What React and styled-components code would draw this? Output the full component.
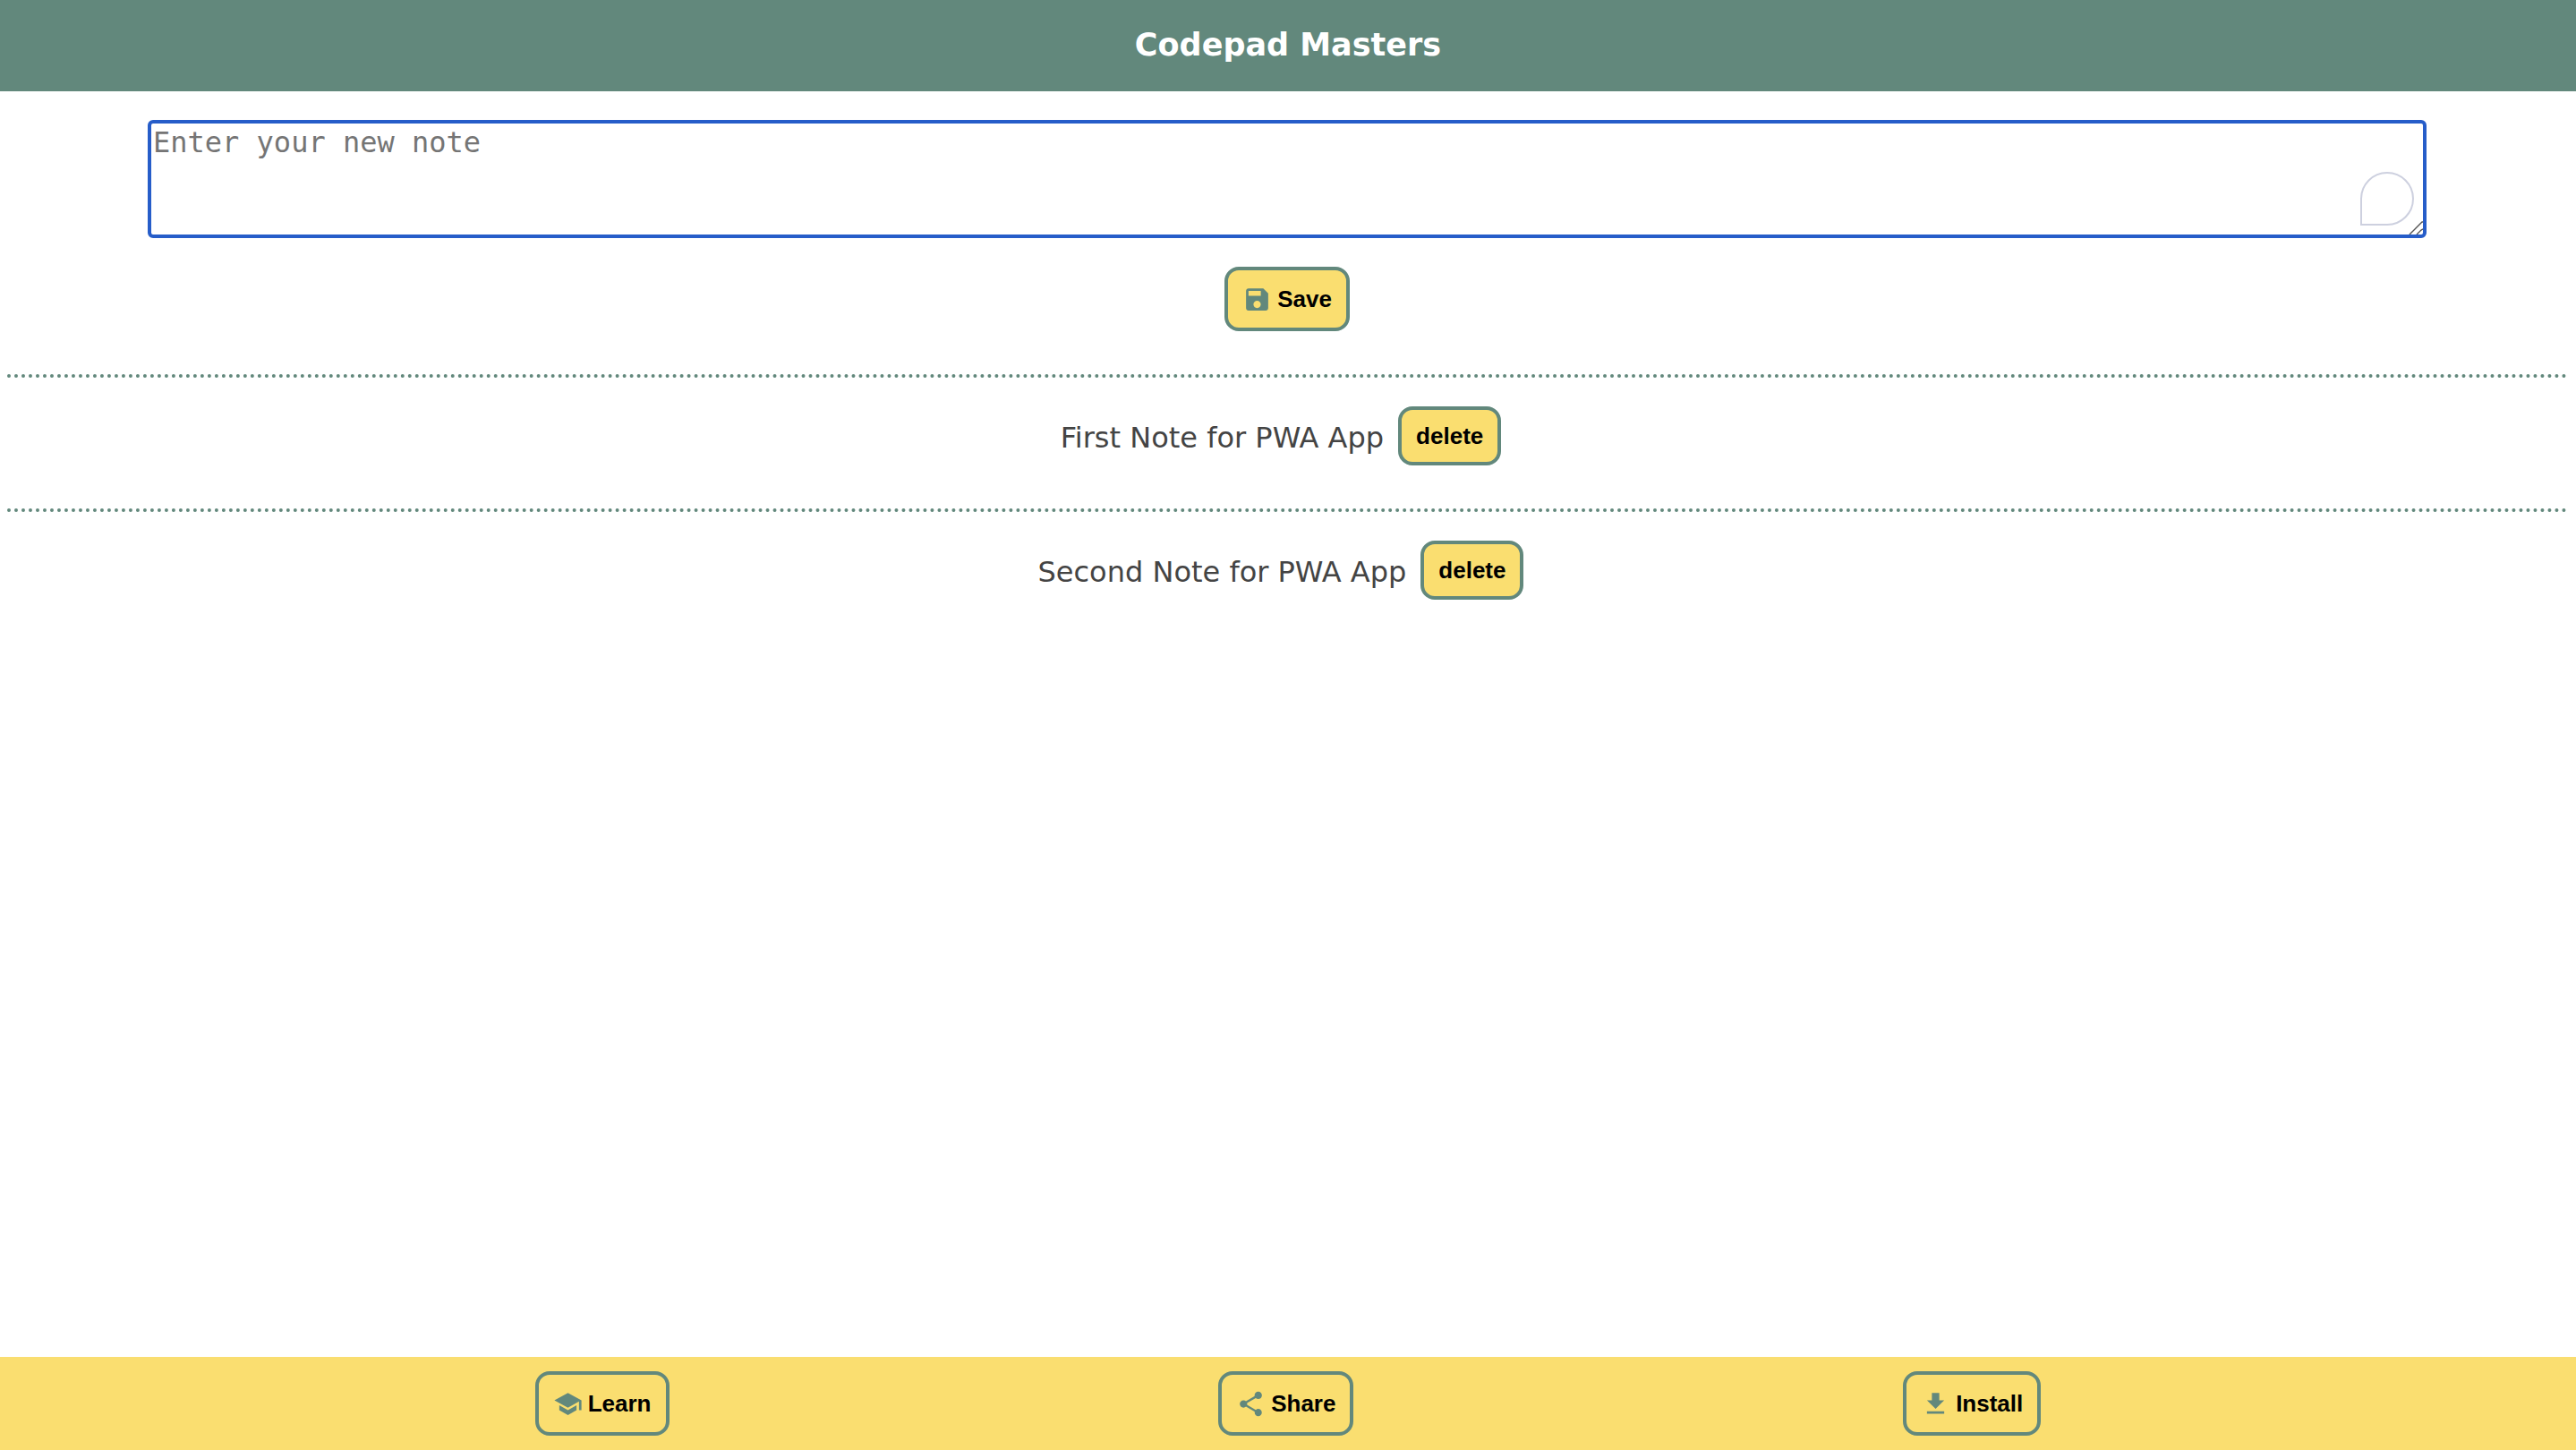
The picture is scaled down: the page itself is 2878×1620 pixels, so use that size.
import React, { useState } from "react";
import styled, { createGlobalStyle } from "styled-components";

const green = "#62887c";
const yellow = "#fade70";

const GlobalStyle = createGlobalStyle`
  *, *::before, *::after { box-sizing: border-box; }
  body {
    margin: 0;
    background: #fff;
    color: #444;
    font-family: Verdana, "DejaVu Sans", sans-serif;
    font-size: 32px;
    line-height: 40px;
  }
`;

const Page = styled.div`
  display: flex;
  flex-direction: column;
  min-height: 100vh;
`;

const Header = styled.header`
  display: flex;
  justify-content: center;
  padding: 30px 16px 32px;
  background: ${green};
`;

const Title = styled.h1`
  margin: 0;
  color: #fff;
  font-size: 35px;
  line-height: 40px;
`;

const Main = styled.main`
  flex: 1;
`;

const NoteForm = styled.form`
  display: flex;
  flex-direction: column;
  align-items: center;
  padding: 32px 167px 48px 165px;
`;

const Field = styled.div`
  position: relative;
  display: flex;
  width: 100%;
`;

const NoteInput = styled.textarea`
  flex: 1;
  min-width: 0;
  height: 132px;
  padding: 2px;
  border: 4px solid #265dc9;
  border-radius: 6px;
  outline: none;
  resize: none;
  background: #fff;
  color: #444;
  font: 32px "DejaVu Sans Mono", monospace;

  &::placeholder { color: #757575; }
`;

const Bubble = styled.span`
  position: absolute;
  right: 14px;
  bottom: 14px;
  width: 60px;
  height: 60px;
  border: 2px solid #cdd0df;
  border-radius: 50% 50% 50% 0;
  pointer-events: none;
`;

const Grip = styled.svg`
  position: absolute;
  right: 4px;
  bottom: 4px;
  width: 16px;
  height: 16px;
  pointer-events: none;
`;

const Button = styled.button`
  display: inline-flex;
  align-items: center;
  justify-content: center;
  gap: 6px;
  height: ${(p) => (p.$compact ? 66 : 72)}px;
  margin: 0 16px;
  padding: 0 16px;
  border: 4px solid ${green};
  border-radius: 16px;
  background: ${yellow};
  color: #000;
  font: bold 26px/30px "Liberation Sans", Arial, sans-serif;
  cursor: pointer;
`;

const SaveButton = styled(Button)`
  margin-top: 32px;
`;

const Icon = styled.svg`
  width: 33px;
  height: 33px;
  fill: ${green};
`;

const NoteList = styled.ul`
  margin: 0 8px;
  padding: 0;
  list-style: none;
`;

const Note = styled.li`
  display: flex;
  align-items: center;
  justify-content: center;
  padding: 32px 0 48px;
  border-top: 4px dotted ${green};
`;

const NoteText = styled.span`
  padding-top: 4px;
`;

const Footer = styled.footer`
  position: sticky;
  bottom: 0;
  display: flex;
  justify-content: space-evenly;
  padding: 16px 0;
  background: ${yellow};
`;

const icons = {
  save: "M17 3H5c-1.11 0-2 .9-2 2v14c0 1.1.89 2 2 2h14c1.1 0 2-.9 2-2V7l-4-4zm-5 16c-1.66 0-3-1.34-3-3s1.34-3 3-3 3 1.34 3 3-1.34 3-3 3zm3-10H5V5h10v4z",
  learn: "M5 13.18v4L12 21l7-3.82v-4L12 17l-7-3.82zM12 3L1 9l11 6 9-4.91V17h2V9L12 3z",
  share: "M18 16.08c-.76 0-1.44.3-1.96.77L8.91 12.7c.05-.23.09-.46.09-.7s-.04-.47-.09-.7l7.05-4.11c.54.5 1.25.81 2.04.81 1.66 0 3-1.34 3-3s-1.34-3-3-3-3 1.34-3 3c0 .24.04.47.09.7L8.04 9.81C7.5 9.31 6.79 9 6 9c-1.66 0-3 1.34-3 3s1.34 3 3 3c.79 0 1.5-.31 2.04-.81l7.12 4.16c-.05.21-.08.43-.08.65 0 1.61 1.31 2.92 2.92 2.92s2.92-1.31 2.92-2.92-1.31-2.92-2.92-2.92z",
  install: "M19 9h-4V3H9v6H5l7 7 7-7zM5 18v2h14v-2H5z",
};

const Glyph = ({ name }) => (
  <Icon viewBox="0 0 24 24" aria-hidden="true">
    <path d={icons[name]} />
  </Icon>
);

const actions = [
  { icon: "learn", label: "Learn" },
  { icon: "share", label: "Share" },
  { icon: "install", label: "Install" },
];

export default function App() {
  const [draft, setDraft] = useState("");
  const [notes, setNotes] = useState(["First Note for PWA App", "Second Note for PWA App"]);

  const save = (event) => {
    event.preventDefault();
    if (!draft.trim()) return;
    setNotes([...notes, draft.trim()]);
    setDraft("");
  };

  return (
    <Page>
      <GlobalStyle />
      <Header>
        <Title>Codepad Masters</Title>
      </Header>
      <Main>
        <NoteForm onSubmit={save}>
          <Field>
            <NoteInput
              aria-label="New note"
              placeholder="Enter your new note"
              value={draft}
              onChange={(event) => setDraft(event.target.value)}
            />
            <Bubble />
            <Grip viewBox="0 0 16 16" fill="none" stroke="#555" strokeWidth="1.4" aria-hidden="true">
              <path d="M1 16 15 2h1M9 16l5-5 2-1" />
            </Grip>
          </Field>
          <SaveButton type="submit">
            <Glyph name="save" />
            Save
          </SaveButton>
        </NoteForm>
        <NoteList>
          {notes.map((note, index) => (
            <Note key={index}>
              <NoteText>{note}</NoteText>
              <Button $compact type="button" onClick={() => setNotes(notes.filter((_, i) => i !== index))}>
                delete
              </Button>
            </Note>
          ))}
        </NoteList>
      </Main>
      <Footer>
        {actions.map(({ icon, label }) => (
          <Button key={icon} type="button">
            <Glyph name={icon} />
            {label}
          </Button>
        ))}
      </Footer>
    </Page>
  );
}
